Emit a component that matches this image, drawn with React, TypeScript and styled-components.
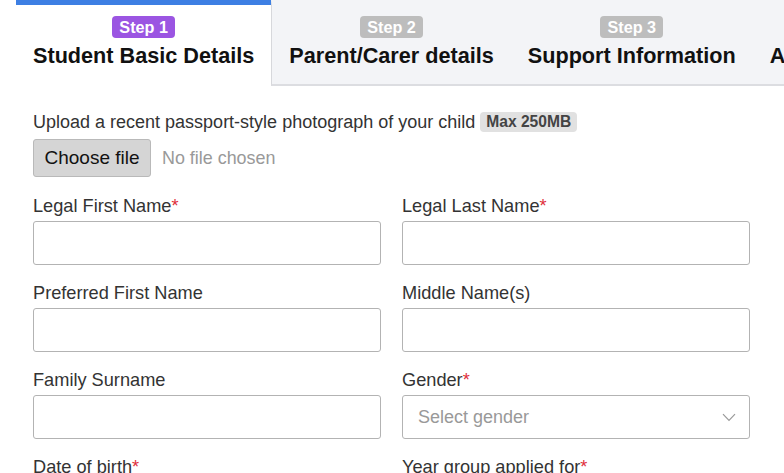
import React from "react";
import styled, { createGlobalStyle } from "styled-components";

const GlobalStyle = createGlobalStyle`
  body {
    margin: 0;
    background: #ffffff;
    font-family: "Liberation Sans", Arial, Helvetica, sans-serif;
  }
`;

const steps = [
  { n: 1, title: "Student Basic Details" },
  { n: 2, title: "Parent/Carer details" },
  { n: 3, title: "Support Information" },
  { n: 4, title: "Additional Information" },
];

const App = () => {
  const active = 1;
  return (
    <>
      <GlobalStyle />
      <Page>
        <TabBar>
          {steps.map((s) => (
            <Tab key={s.n} $active={s.n === active} $edge={s.n === active + 1}>
              <StepBadge $active={s.n === active}>Step {s.n}</StepBadge>
              <TabTitle>{s.title}</TabTitle>
            </Tab>
          ))}
        </TabBar>
        <Content>
          <UploadRow>
            <span>Upload a recent passport-style photograph of your child</span>
            <SizeBadge>Max 250MB</SizeBadge>
          </UploadRow>
          <FileRow>
            <ChooseButton type="button">Choose file</ChooseButton>
            <NoFile>No file chosen</NoFile>
          </FileRow>
          <FormGrid>
            <Field>
              <Label>
                Legal First Name<Req>*</Req>
              </Label>
              <TextInput />
            </Field>
            <Field>
              <Label>
                Legal Last Name<Req>*</Req>
              </Label>
              <TextInput />
            </Field>
            <Field>
              <Label>Preferred First Name</Label>
              <TextInput />
            </Field>
            <Field>
              <Label>Middle Name(s)</Label>
              <TextInput />
            </Field>
            <Field>
              <Label>Family Surname</Label>
              <TextInput />
            </Field>
            <Field>
              <Label>
                Gender<Req>*</Req>
              </Label>
              <SelectBox>
                <Placeholder>Select gender</Placeholder>
                <svg width="14" height="9" viewBox="0 0 14 9" fill="none">
                  <path d="M1 1.2 7 7.4 13 1.2" stroke="#9a9a9a" strokeWidth="1.2" />
                </svg>
              </SelectBox>
            </Field>
            <Field>
              <Label>
                Date of birth<Req>*</Req>
              </Label>
              <TextInput />
            </Field>
            <Field>
              <Label>
                Year group applied for<Req>*</Req>
              </Label>
              <TextInput />
            </Field>
          </FormGrid>
        </Content>
      </Page>
    </>
  );
};

export default App;

const Page = styled.div`
  width: 784px;
  height: 473px;
  overflow: hidden;
  background: #ffffff;
`;

const TabBar = styled.div`
  display: flex;
  padding-left: 16px;
  white-space: nowrap;
  overflow: hidden;
`;

const Tab = styled.div<{ $active: boolean; $edge: boolean }>`
  flex-shrink: 0;
  box-sizing: border-box;
  height: 86px;
  padding: 11px 17px 0;
  display: flex;
  flex-direction: column;
  align-items: center;
  background: ${(p) => (p.$active ? "#ffffff" : "#f3f4f7")};
  border-top: 5px solid ${(p) => (p.$active ? "#3d7fe3" : "transparent")};
  border-bottom: 2px solid ${(p) => (p.$active ? "transparent" : "#dcdde1")};
  border-left: ${(p) => (p.$edge ? "1px solid #d7d8dc" : "none")};
`;

const StepBadge = styled.span<{ $active: boolean }>`
  display: inline-block;
  height: 22px;
  line-height: 22px;
  padding: 0 7px;
  border-radius: 4px;
  font-size: 16.2px;
  font-weight: 700;
  color: #ffffff;
  background: ${(p) => (p.$active ? "#9b55e2" : "#bdbdbd")};
`;

const TabTitle = styled.div`
  margin-top: 5px;
  font-size: 21.65px;
  line-height: 26px;
  font-weight: 700;
  color: #111111;
`;

const Content = styled.div`
  padding: 26px 34px 0 33px;
`;

const UploadRow = styled.div`
  display: flex;
  align-items: center;
  gap: 5px;
  font-size: 18px;
  line-height: 20px;
  color: #333333;
`;

const SizeBadge = styled.span`
  height: 20px;
  line-height: 20px;
  padding: 0 6px;
  border-radius: 4px;
  background: #e1e1e1;
  color: #444444;
  font-size: 15.6px;
  font-weight: 700;
`;

const FileRow = styled.div`
  display: flex;
  align-items: center;
  gap: 11px;
  margin-top: 7px;
`;

const ChooseButton = styled.button`
  box-sizing: border-box;
  height: 38px;
  width: 118px;
  padding: 0;
  border: 1px solid #b9b9b9;
  border-radius: 3px;
  background: #d5d5d5;
  color: #111111;
  font-family: inherit;
  font-size: 19px;
`;

const NoFile = styled.span`
  font-size: 17.9px;
  color: #999999;
`;

const FormGrid = styled.div`
  display: grid;
  grid-template-columns: 1fr 1fr;
  column-gap: 21px;
  row-gap: 18px;
  margin-top: 19px;
`;

const Field = styled.div`
  display: flex;
  flex-direction: column;
  gap: 5px;
`;

const Label = styled.label`
  font-size: 18.2px;
  line-height: 20px;
  color: #333333;
`;

const Req = styled.span`
  color: #e02f3c;
`;

const TextInput = styled.input`
  box-sizing: border-box;
  height: 44px;
  width: 100%;
  border: 1px solid #b3b3b3;
  border-radius: 3px;
  background: #ffffff;
  outline: none;
`;

const SelectBox = styled.div`
  box-sizing: border-box;
  height: 44px;
  display: flex;
  align-items: center;
  justify-content: space-between;
  padding: 0 13px 0 15px;
  border: 1px solid #b3b3b3;
  border-radius: 3px;
`;

const Placeholder = styled.span`
  font-size: 18px;
  color: #999999;
`;
